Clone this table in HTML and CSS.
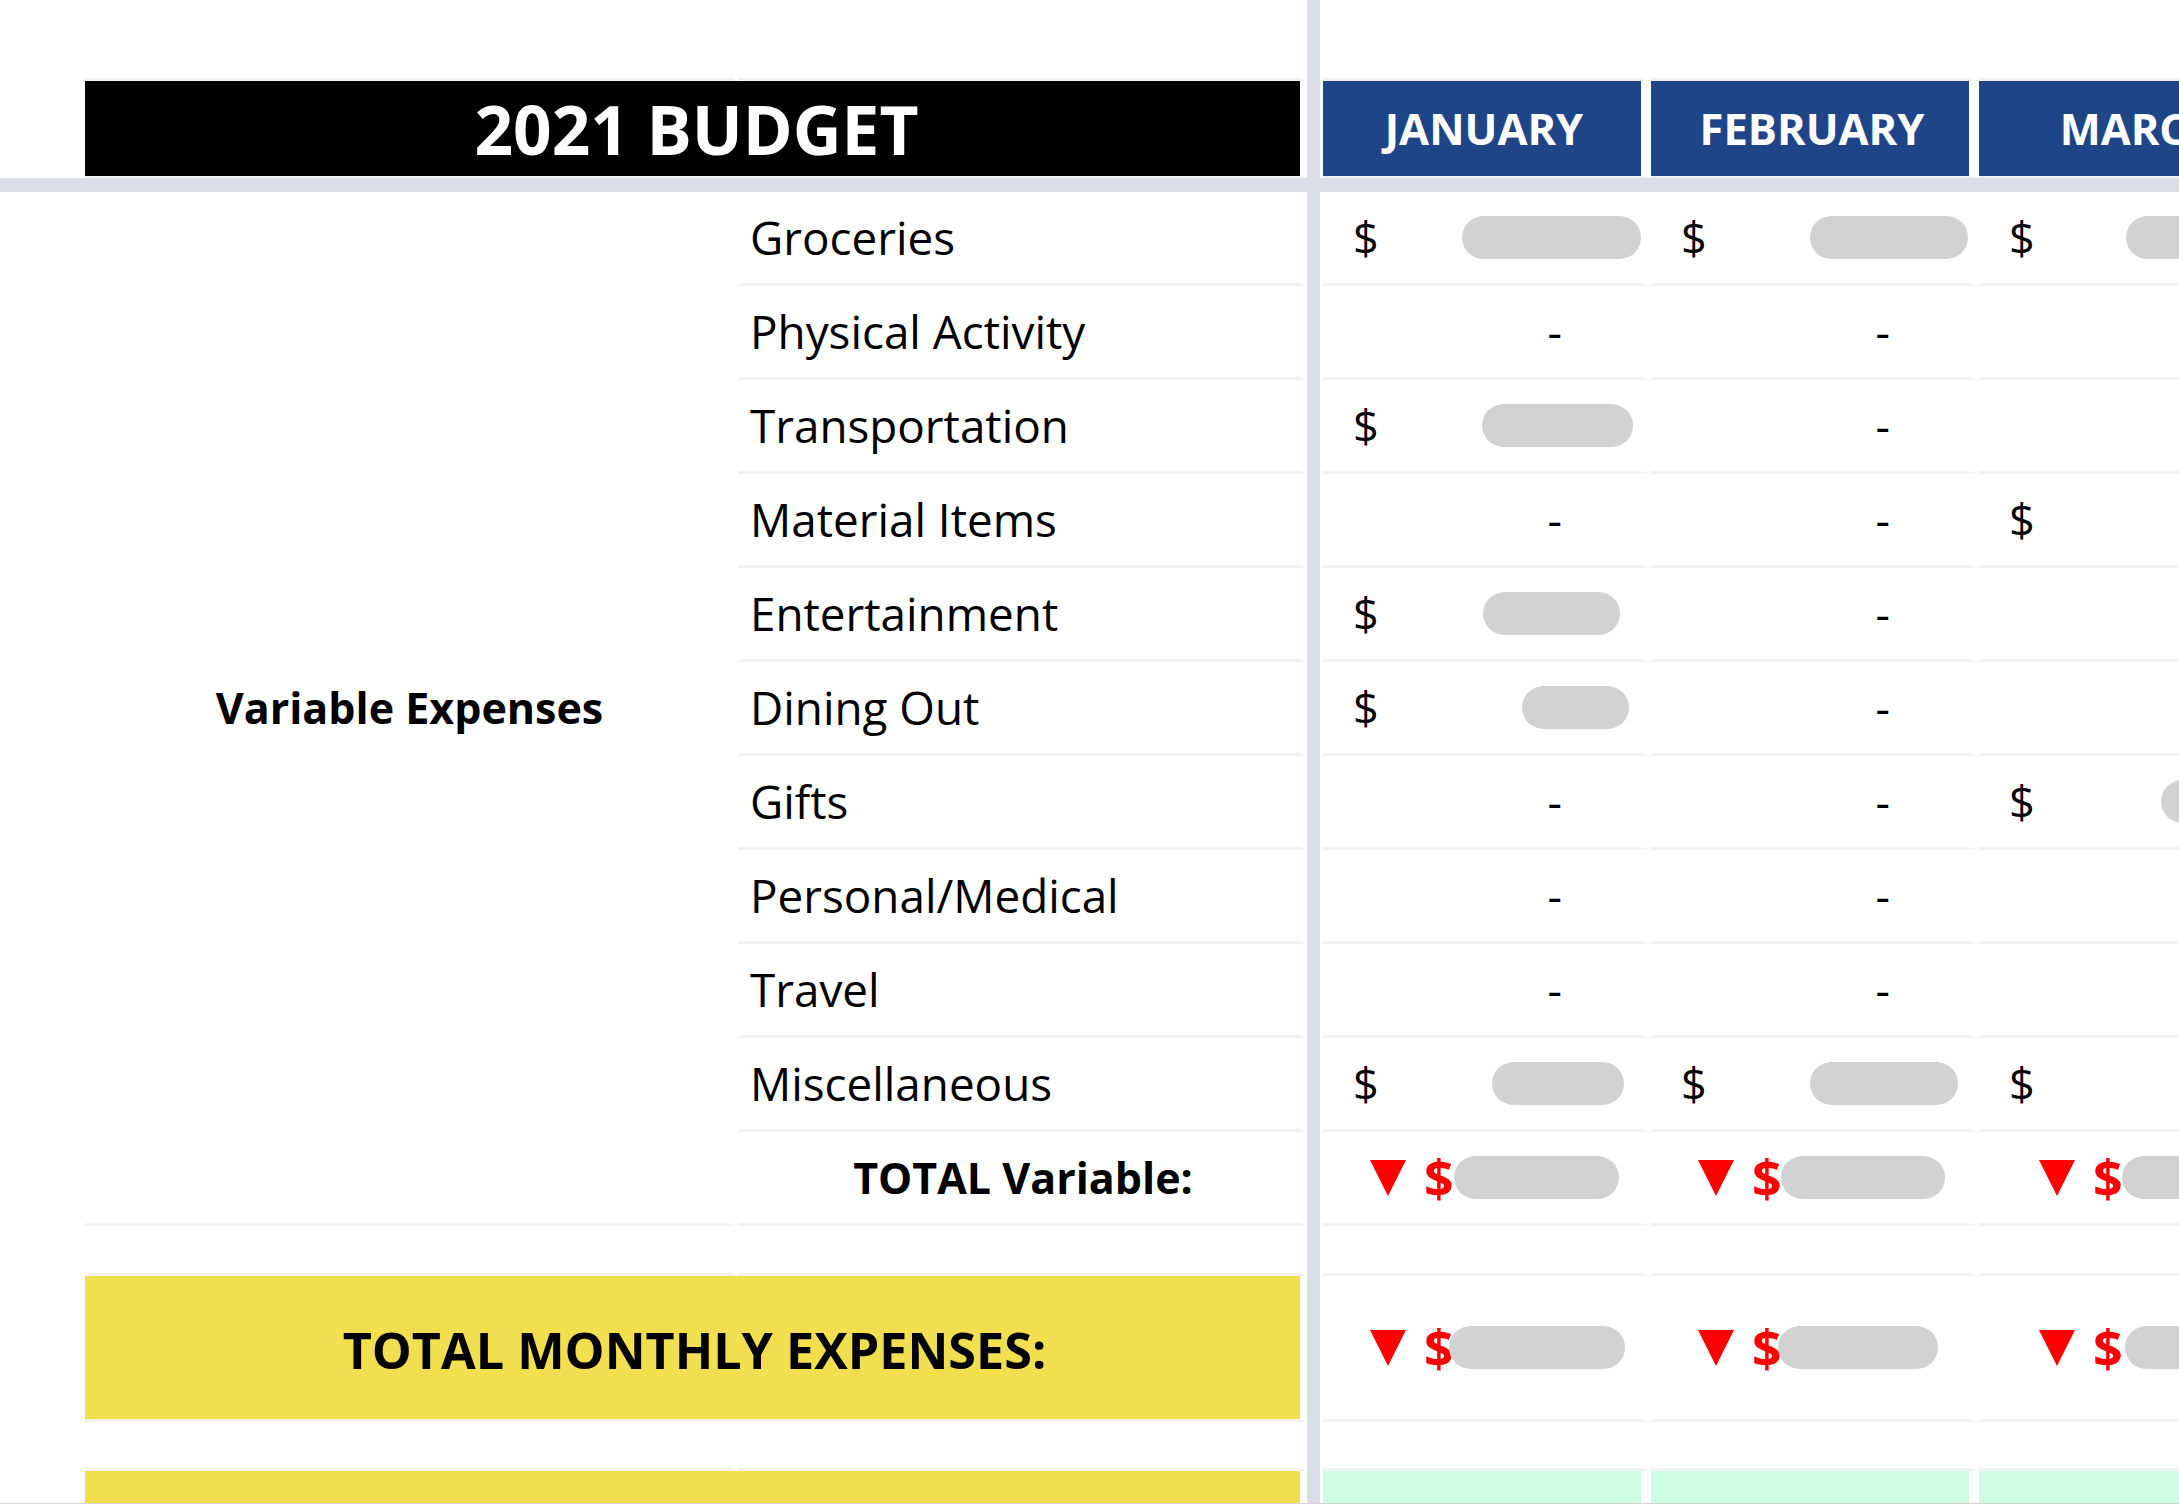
FILE: index.html
```html
<!DOCTYPE html>
<html lang="en">
<head>
<meta charset="utf-8">
<title>2021 Budget</title>
<link rel="stylesheet" href="styles.css">
</head>
<body>
<div class="sheet">
  <div class="pane pane-top">
    <div class="left">
      <div class="cell gap3"></div>
      <div class="cell c"></div>
      <div class="cell title">2021 BUDGET</div>
    </div>
    <div class="vband"></div>
    <div class="right">
      <div class="cell"></div>
      <div class="cell"></div>
      <div class="cell"></div>
      <div class="cell month">JANUARY</div>
      <div class="cell month">FEBRUARY</div>
      <div class="cell month">MARCH</div>
    </div>
  </div>

  <div class="hband"></div>

  <div class="pane pane-bottom">
    <div class="left">
      <div class="cell vexp">Variable Expenses</div>
      <div class="cell c label">Groceries</div>
      <div class="cell c label">Physical Activity</div>
      <div class="cell c label">Transportation</div>
      <div class="cell c label">Material Items</div>
      <div class="cell c label">Entertainment</div>
      <div class="cell c label">Dining Out</div>
      <div class="cell c label">Gifts</div>
      <div class="cell c label">Personal/Medical</div>
      <div class="cell c label">Travel</div>
      <div class="cell c label">Miscellaneous</div>
      <div class="cell c totlabel">TOTAL Variable:</div>

      <div class="cell gap3"></div>
      <div class="cell c"></div>

      <div class="cell yellow">TOTAL MONTHLY EXPENSES:</div>

      <div class="cell gap3"></div>
      <div class="cell c"></div>

      <div class="cell yellow nob"></div>
    </div>
    <div class="vband"></div>
    <div class="right">
      <!-- Groceries -->
      <div class="cell money"><span class="cur">$</span><span class="pill" style="--w:179px;--r:0px"></span></div>
      <div class="cell money"><span class="cur">$</span><span class="pill" style="--w:158px;--r:1px"></span></div>
      <div class="cell money"><span class="cur">$</span><span class="pill" style="--w:164px;--r:7px"></span></div>
      <!-- Physical Activity -->
      <div class="cell dash">-</div>
      <div class="cell dash">-</div>
      <div class="cell dash">-</div>
      <!-- Transportation -->
      <div class="cell money"><span class="cur">$</span><span class="pill" style="--w:151px;--r:8px"></span></div>
      <div class="cell dash">-</div>
      <div class="cell dash">-</div>
      <!-- Material Items -->
      <div class="cell dash">-</div>
      <div class="cell dash">-</div>
      <div class="cell money"><span class="cur">$</span><span class="pill" style="--w:100px;--r:7px"></span></div>
      <!-- Entertainment -->
      <div class="cell money"><span class="cur">$</span><span class="pill" style="--w:137px;--r:21px"></span></div>
      <div class="cell dash">-</div>
      <div class="cell dash">-</div>
      <!-- Dining Out -->
      <div class="cell money"><span class="cur">$</span><span class="pill" style="--w:107px;--r:12px"></span></div>
      <div class="cell dash">-</div>
      <div class="cell dash">-</div>
      <!-- Gifts -->
      <div class="cell dash">-</div>
      <div class="cell dash">-</div>
      <div class="cell money"><span class="cur">$</span><span class="pill" style="--w:125px;--r:11px"></span></div>
      <!-- Personal/Medical -->
      <div class="cell dash">-</div>
      <div class="cell dash">-</div>
      <div class="cell dash">-</div>
      <!-- Travel -->
      <div class="cell dash">-</div>
      <div class="cell dash">-</div>
      <div class="cell dash">-</div>
      <!-- Miscellaneous -->
      <div class="cell money"><span class="cur">$</span><span class="pill" style="--w:132px;--r:17px"></span></div>
      <div class="cell money"><span class="cur">$</span><span class="pill" style="--w:148px;--r:11px"></span></div>
      <div class="cell money"><span class="cur">$</span><span class="pill" style="--w:100px;--r:10px"></span></div>
      <!-- TOTAL Variable -->
      <div class="cell tot"><svg class="down" viewBox="0 0 36 36" width="36" height="36"><polygon points="0,0 36,0 18,36"/></svg><span class="rcur">$</span><span class="pill" style="--w:165px;--ml:0px"></span></div>
      <div class="cell tot"><svg class="down" viewBox="0 0 36 36" width="36" height="36"><polygon points="0,0 36,0 18,36"/></svg><span class="rcur">$</span><span class="pill" style="--w:164px;--ml:-1px"></span></div>
      <div class="cell tot wide"><svg class="down" viewBox="0 0 36 36" width="36" height="36"><polygon points="0,0 36,0 18,36"/></svg><span class="rcur">$</span><span class="pill" style="--w:150px;--ml:-1px"></span></div>
      <!-- empty -->
      <div class="cell"></div>
      <div class="cell"></div>
      <div class="cell"></div>
      <!-- TOTAL MONTHLY -->
      <div class="cell tot"><svg class="down" viewBox="0 0 36 36" width="36" height="36"><polygon points="0,0 36,0 18,36"/></svg><span class="rcur">$</span><span class="pill" style="--w:176px;--ml:-5px"></span></div>
      <div class="cell tot"><svg class="down" viewBox="0 0 36 36" width="36" height="36"><polygon points="0,0 36,0 18,36"/></svg><span class="rcur">$</span><span class="pill" style="--w:160px;--ml:-4px"></span></div>
      <div class="cell tot wide"><svg class="down" viewBox="0 0 36 36" width="36" height="36"><polygon points="0,0 36,0 18,36"/></svg><span class="rcur">$</span><span class="pill" style="--w:150px;--ml:2px"></span></div>
      <!-- empty -->
      <div class="cell"></div>
      <div class="cell"></div>
      <div class="cell"></div>
      <!-- next row -->
      <div class="cell green nob"></div>
      <div class="cell green nob"></div>
      <div class="cell green nob"></div>
    </div>
  </div>
</div>
</body>
</html>
```
FILE: styles.css
```css
* {
  box-sizing: border-box;
}

html,
body {
  margin: 0;
  padding: 0;
  background: #ffffff;
}

body {
  width: 2179px;
  height: 1504px;
  overflow: hidden;
  font-family: "Open Sans", "Noto Sans", sans-serif;
  color: #000000;
}

.sheet {
  width: 2179px;
  height: 1504px;
  border-bottom: 1px solid #d4d4d4;
  overflow: hidden;
  display: flex;
  flex-direction: column;
}

.pane {
  display: flex;
  flex: none;
}

.pane-top {
  height: 178px;
}

.pane-bottom {
  flex: 1;
  min-height: 0;
}

.hband {
  height: 14px;
  flex: none;
  background: #dadfe7;
}

.vband {
  width: 13px;
  flex: none;
  background: #dadfe7;
}

.left {
  width: 1307px;
  flex: none;
  padding-left: 85px;
  display: grid;
  grid-template-columns: 653px 569px;
}

.right {
  flex: 1;
  min-width: 0;
  overflow: hidden;
  padding-left: 3px;
  display: grid;
  grid-template-columns: repeat(3, 328px);
}

.pane-top .left,
.pane-top .right {
  grid-template-rows: 81px 97px;
}

.pane-bottom .left,
.pane-bottom .right {
  grid-template-rows: repeat(11, 94px) 50px 146px 49px 32px;
}

/* generic spreadsheet cell */
.cell {
  display: flex;
  align-items: center;
  min-width: 0;
  border-bottom: 3px solid #f2f2f2;
  border-right: 10px solid #ffffff;
  line-height: 1;
  white-space: nowrap;
}

.cell.c {
  border-right-width: 7px;
}

.cell.gap3 {
  border-right-width: 6px;
}

.cell.nob {
  border-bottom: 0;
}

/* header row */
.title {
  grid-column: span 2;
  justify-content: center;
  background: #000000;
  color: #ffffff;
  font-weight: 700;
  font-size: 67.5px;
  border-bottom-width: 2px;
  border-right-width: 7px;
  padding-top: 2px;
  padding-left: 8px;
}

.month {
  justify-content: center;
  background: #1f4589;
  color: #ffffff;
  font-weight: 700;
  font-size: 43.5px;
  border-bottom-width: 2px;
  padding-left: 4px;
}

/* left labels */
.vexp {
  grid-row: span 11;
  justify-content: center;
  font-weight: 700;
  font-size: 43px;
  padding-left: 6px;
}

.label {
  font-size: 45.8px;
  padding-left: 12px;
}

.totlabel {
  justify-content: center;
  font-weight: 700;
  font-size: 43px;
  padding-left: 8px;
}

.yellow {
  grid-column: span 2;
  justify-content: center;
  background: #f2df4f;
  border-right-width: 7px;
  font-weight: 700;
  font-size: 50.3px;
  padding-top: 6px;
  padding-left: 4px;
}

.green {
  background: #cefce4;
}

/* values */
.money {
  justify-content: space-between;
  padding-left: 30px;
}

.cur {
  font-size: 45px;
}

.pill {
  display: block;
  flex: none;
  width: var(--w);
  height: 43px;
  margin-right: var(--r, 0px);
  margin-left: var(--ml, 0px);
  border-radius: 22px;
  background: #d1d2d4;
  position: relative;
}

.dash {
  justify-content: flex-end;
  padding-right: 79px;
  font-size: 45px;
}

.tot {
  padding-left: 47px;
}

.tot.wide {
  padding-left: 60px;
}

.down {
  display: block;
  flex: none;
  fill: #ff0000;
}

.rcur {
  color: #ff0000;
  font-weight: 700;
  font-size: 52px;
  margin-left: 18px;
}
```
